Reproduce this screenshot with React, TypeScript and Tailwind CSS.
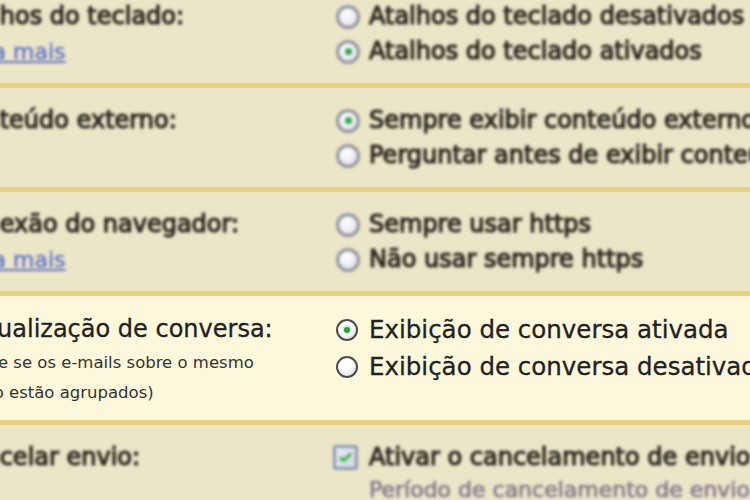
import React from "react";

type Option = { label: string; checked?: boolean };

type Setting = {
    label: string;
    link?: string;
    options: Option[];
};

const TOP_SETTINGS: Setting[] = [
    {
        label: "Atalhos do teclado:",
        link: "Saiba mais",
        options: [{ label: "Atalhos do teclado desativados" }, { label: "Atalhos do teclado ativados", checked: true }],
    },
    {
        label: "Conteúdo externo:",
        options: [
            { label: "Sempre exibir conteúdo externo fornecido por remetentes confiáveis", checked: true },
            { label: "Perguntar antes de exibir conteúdo externo" },
        ],
    },
    {
        label: "Conexão do navegador:",
        link: "Saiba mais",
        options: [{ label: "Sempre usar https" }, { label: "Não usar sempre https" }],
    },
];

function Radio({ checked, soft }: { checked?: boolean; soft?: boolean }) {
    if (soft) {
        return (
            <span className="flex size-[24px] shrink-0 items-center justify-center rounded-full border-[3px] border-[#8e939b] bg-[radial-gradient(circle_at_40%_35%,#ffffff,#d9dbe2)]">
                {checked && <span className="size-[7px] rounded-full bg-[#2fa84a]" />}
            </span>
        );
    }
    return (
        <span className="flex size-[22px] shrink-0 items-center justify-center rounded-full border-2 border-[#4d4d4d] bg-[radial-gradient(circle_at_35%_30%,#ffffff_40%,#d4d4d4)]">
            {checked && (
                <span className="flex size-[9px] items-center justify-center rounded-full bg-[#d6ecd6]">
                    <span className="size-[6px] rounded-full bg-[#2f9a3c]" />
                </span>
            )}
        </span>
    );
}

function Checkbox() {
    return (
        <span className="flex size-[25px] shrink-0 items-center justify-center rounded-[3px] border-[3px] border-[#8d9bb3] bg-[linear-gradient(135deg,#e8ecf0,#cfd6df)]">
            <svg viewBox="0 0 16 16" className="size-[15px]">
                <path d="M3 8.5l3 3 7-7" fill="none" stroke="#39ad45" strokeWidth="3" strokeLinecap="round" strokeLinejoin="round" />
            </svg>
        </span>
    );
}

function SoftRow({ setting }: { setting: Setting }) {
    return (
        <div className="border-b-[5px] border-[#e9cf7f] pt-[15px] pb-[14px]">
            <div className="grid grid-cols-[378px_1fr] text-[#2c2920] [filter:blur(1.4px)] [-webkit-text-stroke:1.2px_#2c2920]">
                <div className="-ml-[5px] leading-[35px]">
                    <div className="text-[24px]">{setting.label}</div>
                    {setting.link && (
                        <div className="-ml-[8px] text-[22px] text-[#5b70c4] underline [-webkit-text-stroke:0.4px_#5b70c4]">
                            {setting.link}
                        </div>
                    )}
                </div>
                <div className="text-[24px] leading-[35px]">
                    {setting.options.map((option) => (
                        <div key={option.label} className="flex items-center gap-[9px] whitespace-nowrap">
                            <Radio soft checked={option.checked} />
                            <span>{option.label}</span>
                        </div>
                    ))}
                </div>
            </div>
        </div>
    );
}

export default function App() {
    return (
        <div className="h-[500px] w-[750px] overflow-hidden bg-[#ece6c9] font-['DejaVu_Sans',sans-serif]">
            <div className="-mt-[16px] -ml-[42px] w-[1100px]">
                {TOP_SETTINGS.map((setting) => (
                    <SoftRow key={setting.label} setting={setting} />
                ))}

                <div className="border-b-[5px] border-[#e9cf7f] bg-[#fdf7db] pt-[15px] pb-[12px]">
                    <div className="grid grid-cols-[378px_1fr] text-[#222222]">
                        <div className="pl-[4px]">
                            <div className="text-[24px] leading-[37px] [-webkit-text-stroke:0.3px_#222222]">
                                Visualização de conversa:
                            </div>
                            <div className="-ml-[12px] text-[16.5px] leading-[30px] text-[#333333]">
                                <div>(define se os e-mails sobre o mesmo</div>
                                <div className="-ml-[11px]">assunto estão agrupados)</div>
                            </div>
                        </div>
                        <div className="text-[24.5px] leading-[37px] [-webkit-text-stroke:0.3px_#222222]">
                            <div className="flex items-center gap-[11px] whitespace-nowrap">
                                <Radio checked />
                                <span>Exibição de conversa ativada</span>
                            </div>
                            <div className="flex items-center gap-[11px] whitespace-nowrap">
                                <Radio />
                                <span>Exibição de conversa desativada</span>
                            </div>
                        </div>
                    </div>
                </div>

                <div className="pt-[15px]">
                    <div className="grid grid-cols-[378px_1fr] text-[#2c2920] [filter:blur(1.4px)] [-webkit-text-stroke:1.2px_#2c2920]">
                        <div className="-ml-[5px] text-[24px] leading-[35px]">Cancelar envio:</div>
                        <div className="-ml-[3px]">
                            <div className="flex items-center gap-[11px] whitespace-nowrap text-[24px] leading-[35px]">
                                <Checkbox />
                                <span>Ativar o cancelamento de envio</span>
                            </div>
                            <div className="pl-[36px] whitespace-nowrap text-[22px] leading-[30px] text-[#85788a] [-webkit-text-stroke:0.7px_#85788a]">
                                Período de cancelamento de envio: 10 segundos
                            </div>
                        </div>
                    </div>
                </div>
            </div>
        </div>
    );
}
